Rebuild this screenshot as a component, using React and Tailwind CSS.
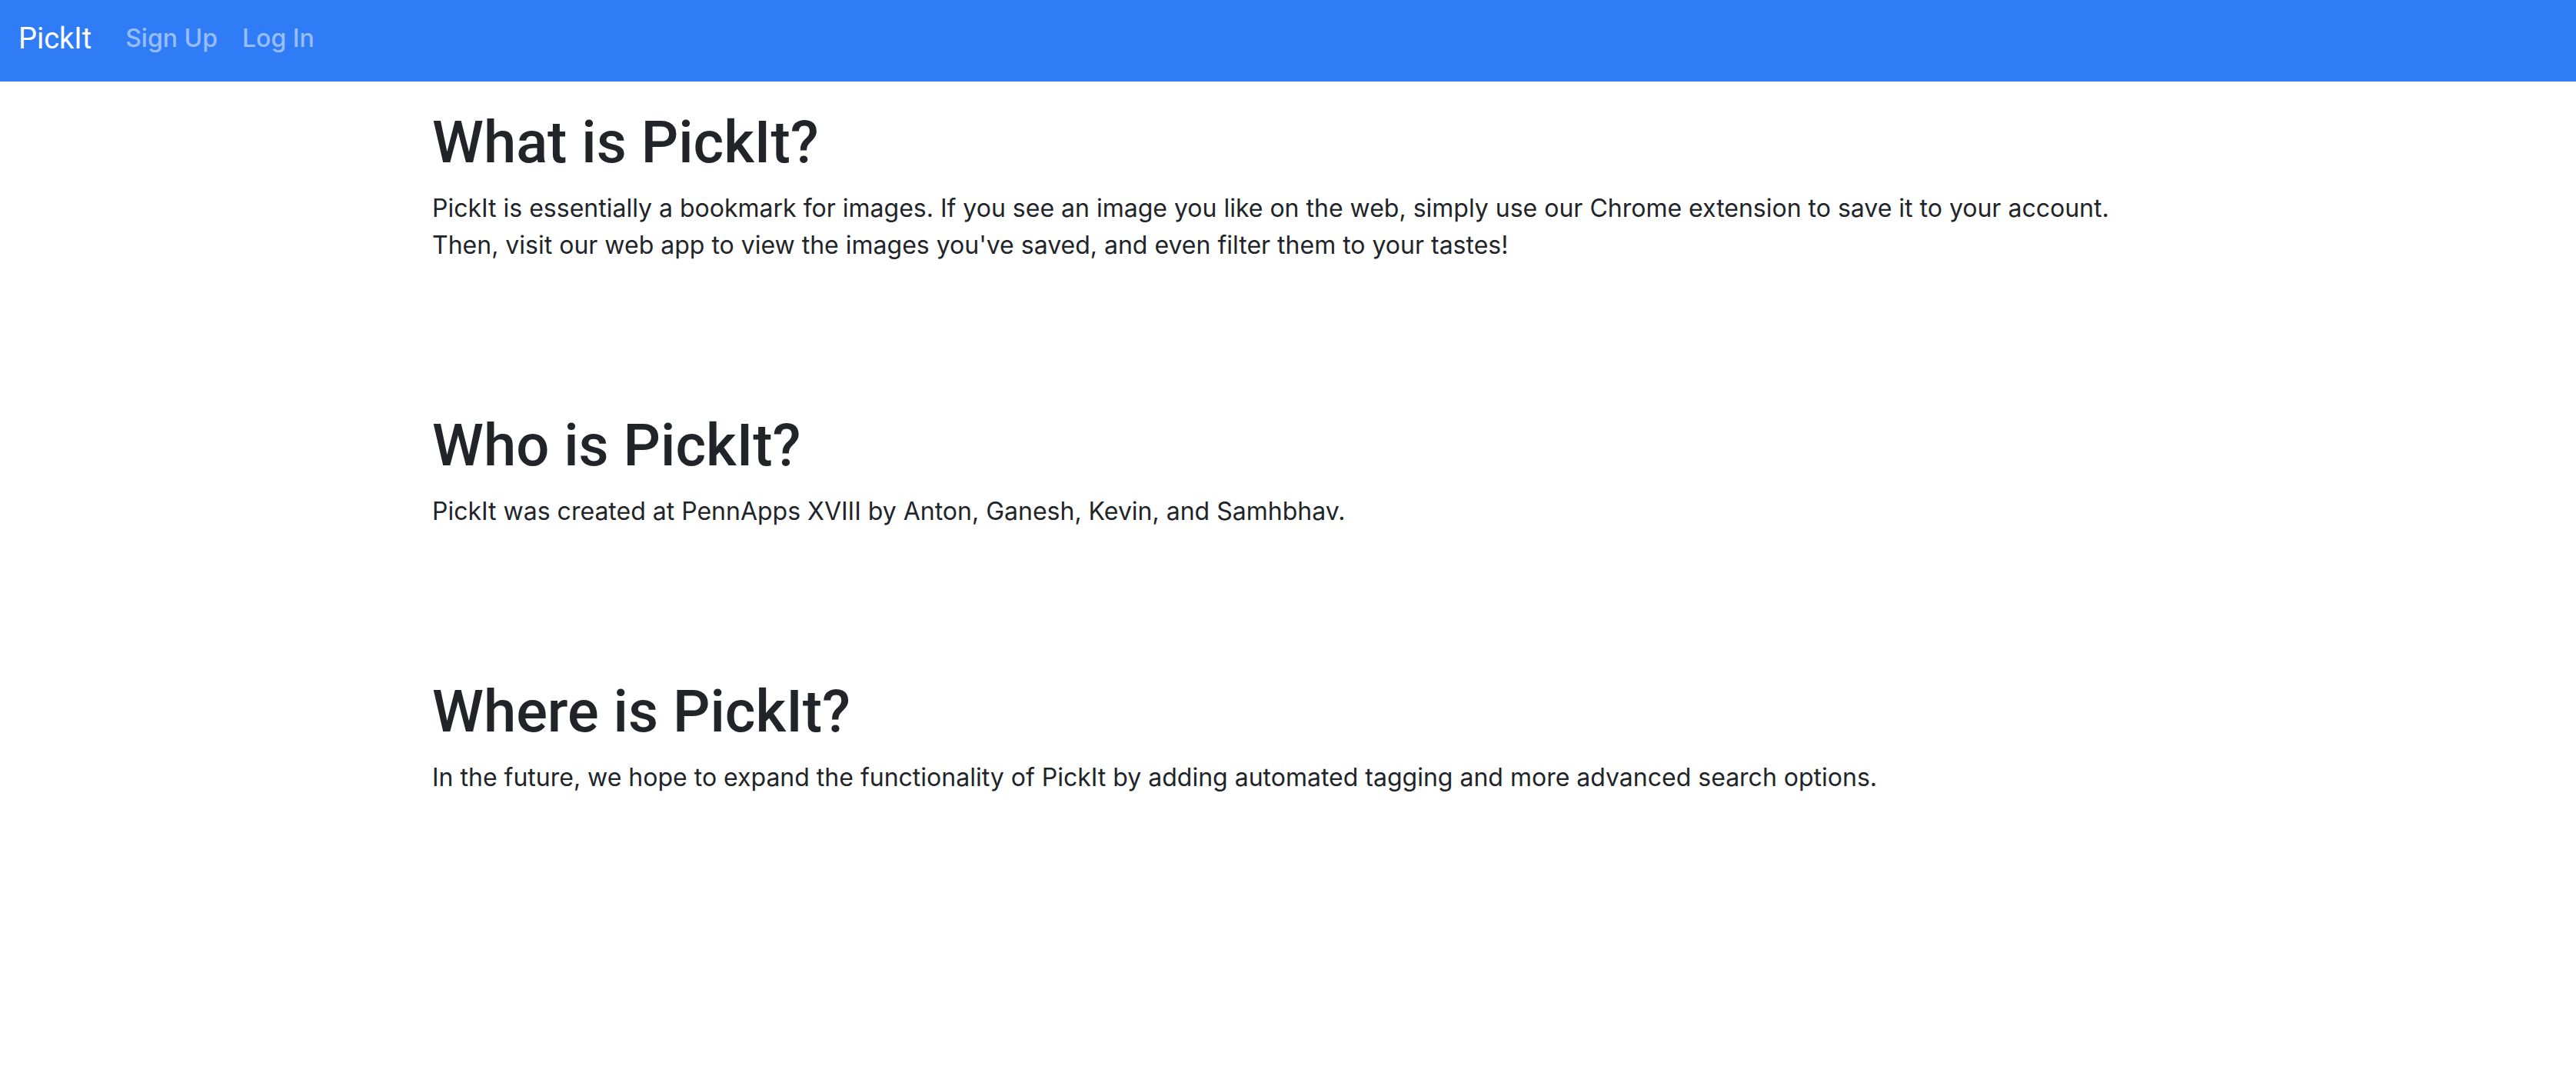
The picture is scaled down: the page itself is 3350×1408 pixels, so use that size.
const sections = [
  {
    title: "What is PickIt?",
    body: "PickIt is essentially a bookmark for images. If you see an image you like on the web, simply use our Chrome extension to save it to your account. Then, visit our web app to view the images you've saved, and even filter them to your tastes!",
  },
  {
    title: "Who is PickIt?",
    body: "PickIt was created at PennApps XVIII by Anton, Ganesh, Kevin, and Samhbhav.",
  },
  {
    title: "Where is PickIt?",
    body: "In the future, we hope to expand the functionality of PickIt by adding automated tagging and more advanced search options.",
  },
];

export default function App() {
  return (
    <div className="min-h-screen bg-white font-['Inter',sans-serif] text-[#212529]">
      <nav className="flex items-center bg-[#2f7cf6] px-6 pt-[18px] pb-6 leading-[64px]">
        <a href="#" className="mr-11 font-['Roboto',sans-serif] text-[38px] text-white">PickIt</a>
        <a href="#" className="mr-8 text-[32px] font-medium text-white/50">Sign Up</a>
        <a href="#" className="text-[32px] font-medium text-white/50">Log In</a>
      </nav>
      <main className="mx-auto max-w-[2282px] px-7 pt-[31px]">
        {sections.map((s) => (
          <section key={s.title} className="mb-[188px]">
            <h1 className="mb-[14px] font-['Roboto',sans-serif] text-[76px] leading-[96px] font-medium">{s.title}</h1>
            <p className="text-[32px] leading-[48px]">{s.body}</p>
          </section>
        ))}
      </main>
    </div>
  );
}
